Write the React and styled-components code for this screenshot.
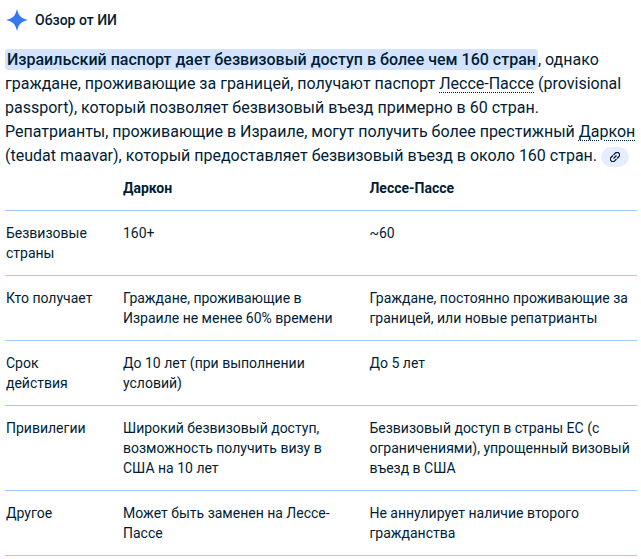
import styled, { createGlobalStyle } from "styled-components";

const rows = [
	["Безвизовые страны", "160+", "~60"],
	[
		"Кто получает",
		"Граждане, проживающие в Израиле не менее 60% времени",
		"Граждане, постоянно проживающие за границей, или новые репатрианты",
	],
	["Срок действия", "До 10 лет (при выполнении условий)", "До 5 лет"],
	[
		"Привилегии",
		"Широкий безвизовый доступ, возможность получить визу в США на 10 лет",
		"Безвизовый доступ в страны ЕС (с ограничениями), упрощенный визовый въезд в США",
	],
	[
		"Другое",
		"Может быть заменен на Лессе-Пассе",
		"Не аннулирует наличие второго гражданства",
	],
];

export default function App() {
	return (
		<>
			<GlobalStyle />
			<StyledOverview>
				<StyledHeader>
					<svg width='22' height='22' viewBox='0 0 22 22' aria-hidden='true'>
						<path
							d='M11 0C12 4 12.8 5.8 14.5 7.5C16.2 9.2 18 10 22 11C18 12 16.2 12.8 14.5 14.5C12.8 16.2 12 18 11 22C10 18 9.2 16.2 7.5 14.5C5.8 12.8 4 12 0 11C4 10 5.8 9.2 7.5 7.5C9.2 5.8 10 4 11 0Z'
							fill='#3279f0'
						/>
					</svg>
					<h1>Обзор от ИИ</h1>
				</StyledHeader>
				<StyledSummary>
					<StyledMark>
						Израильский паспорт дает безвизовый доступ в более чем 160 стран
					</StyledMark>
					, однако граждане, проживающие за границей, получают паспорт{" "}
					<StyledLink href='#lesse'>Лессе-Пассе</StyledLink> (provisional
					passport), который позволяет безвизовый въезд примерно в 60 стран.
					Репатрианты, проживающие в Израиле, могут получить более престижный{" "}
					<StyledLink href='#darkon'>Даркон</StyledLink> (teudat maavar),
					который предоставляет безвизовый въезд в около 160 стран.{" "}
					<StyledSource type='button' aria-label='Источники'>
						<LinkIcon />
					</StyledSource>
				</StyledSummary>
				<StyledTable>
					<colgroup>
						<StyledCol $width='117px' />
						<StyledCol $width='39%' />
						<StyledCol $width='auto' />
					</colgroup>
					<thead>
						<tr>
							<td />
							<th scope='col' id='darkon'>Даркон</th>
							<th scope='col' id='lesse'>Лессе-Пассе</th>
						</tr>
					</thead>
					<tbody>
						{rows.map((row) => (
							<tr key={row[0]}>
								{row.map((cell) => (
									<td key={cell}>{cell}</td>
								))}
							</tr>
						))}
					</tbody>
				</StyledTable>
			</StyledOverview>
		</>
	);
}

function LinkIcon() {
	return (
		<svg width='10' height='10' viewBox='0 0 24 24' aria-hidden='true'>
			<g
				transform='rotate(-45 12 12)'
				fill='none'
				stroke='#001d35'
				strokeWidth='3'
			>
				<path d='M11 6H5a6 6 0 0 0 0 12h6M13 6h6a6 6 0 0 1 0 12h-6M7 12h10' />
			</g>
		</svg>
	);
}

const GlobalStyle = createGlobalStyle`
	* {
		box-sizing: border-box;
	}
	body {
		margin: 0;
		background: #ffffff;
		color: #001d35;
		font-family: Roboto, "Liberation Sans", sans-serif;
	}
`;

const StyledOverview = styled.main`
	padding: 9px 4px 0 5px;
`;

const StyledHeader = styled.header`
	display: flex;
	align-items: center;
	gap: 7px;
	padding-left: 1px;
	& > h1 {
		margin: 0;
		font-weight: 500;
		font-size: 14px;
		line-height: 22px;
	}
`;

const StyledSummary = styled.p`
	margin: 17px 0 0;
	font-size: 16px;
	line-height: 24px;
`;

const StyledMark = styled.mark`
	background: #d3e3fd;
	color: inherit;
	font-weight: 500;
	border-radius: 4px;
	padding: 1px 2px;
`;

const StyledLink = styled.a`
	color: inherit;
	text-decoration: underline dotted 1px;
	text-underline-offset: 3px;
`;

const StyledSource = styled.button`
	display: inline-flex;
	align-items: center;
	justify-content: center;
	width: 28px;
	height: 20px;
	margin: -2px 0;
	padding: 0;
	border: 0;
	border-radius: 10px;
	background: #e5edff;
	vertical-align: middle;
`;

const StyledTable = styled.table`
	width: 100%;
	border-collapse: collapse;
	table-layout: fixed;
	font-size: 14px;
	line-height: 20px;
	text-align: left;
	& th,
	& td {
		padding: 12px 16px 12px 1px;
		border-bottom: 1px solid #a3c9ff;
		vertical-align: top;
	}
	& thead th,
	& thead td {
		padding-top: 10px;
	}
	& td:first-child {
		padding-right: 24px;
	}
	& td:last-child {
		padding-right: 4px;
	}
	& th {
		font-weight: 700;
	}
`;

const StyledCol = styled.col`
	width: ${({ $width }) => $width};
`;
